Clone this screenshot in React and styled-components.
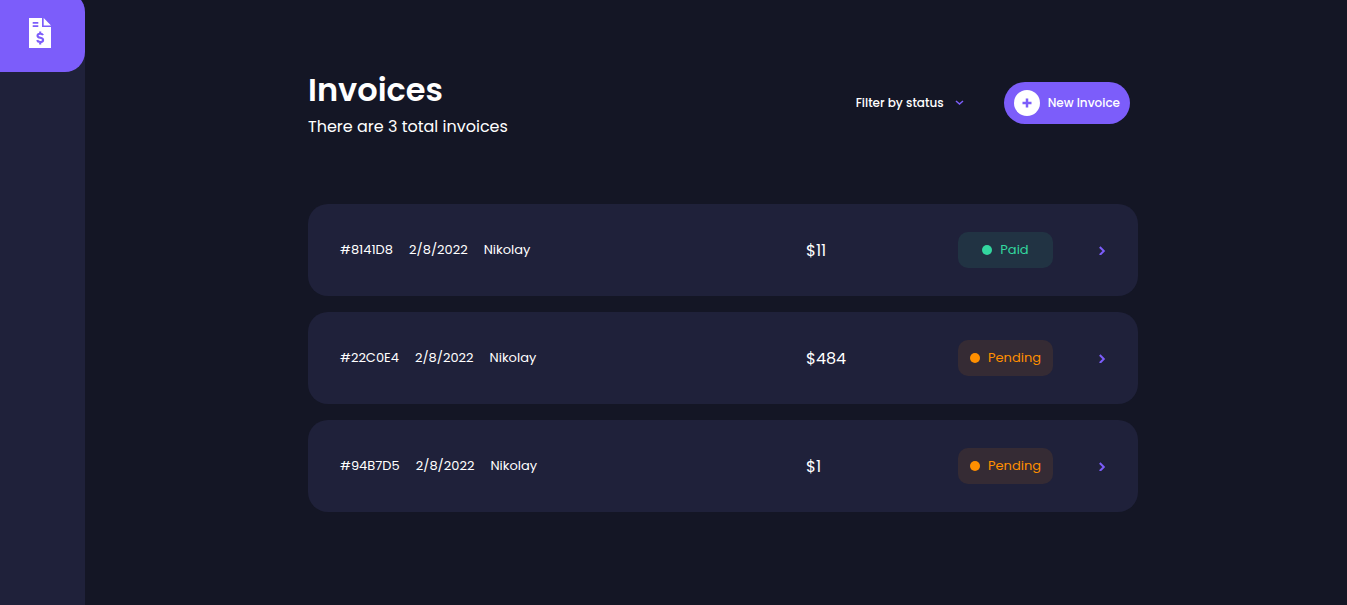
import React from "react";
import styled, { createGlobalStyle } from "styled-components";

const GlobalStyle = createGlobalStyle`
  * { box-sizing: border-box; }
  body {
    margin: 0;
    background: #141625;
    color: #fff;
    font-family: Poppins, Inter, "Liberation Sans", sans-serif;
  }
`;

const Shell = styled.div`
  display: flex;
  min-height: 100vh;
  overflow: hidden;
`;

const Sidebar = styled.nav`
  width: 85px;
  flex: none;
  margin-top: -8px;
  background: #1f213a;
  border-top-right-radius: 20px;
`;

const HomeLink = styled.a`
  display: flex;
  align-items: center;
  justify-content: center;
  height: 80px;
  padding-right: 5px;
  padding-top: 2px;
  background: #7c5dfa;
  border-radius: 0 20px 20px 0;
`;

const Main = styled.main`
  flex: 1;
  min-width: 0;
  padding: 66px 16px 32px 30px;
`;

const Content = styled.div`
  max-width: 830px;
  margin: 0 auto;
`;

const Header = styled.header`
  display: flex;
  align-items: center;
  justify-content: space-between;
  padding-right: 8px;
  margin-bottom: 64px;
`;

const Title = styled.h1`
  margin: 0;
  font-size: 32px;
  line-height: 48px;
  font-weight: 600;
`;

const Subtitle = styled.p`
  margin: 0;
  font-size: 16px;
  line-height: 26px;
`;

const Actions = styled.div`
  display: flex;
  align-items: center;
  gap: 40px;
`;

const Filter = styled.div`
  position: relative;
  display: flex;
  align-items: center;
`;

const FilterSelect = styled.select`
  appearance: none;
  width: 108px;
  padding: 0 16px 0 0;
  border: 0;
  background: transparent;
  color: #fff;
  font: inherit;
  font-size: 12px;
  line-height: 20px;
  font-weight: 500;
  cursor: pointer;
`;

const FilterArrow = styled.svg`
  position: absolute;
  right: 0;
  pointer-events: none;
`;

const NewButton = styled.button`
  display: flex;
  align-items: center;
  gap: 8px;
  height: 42px;
  padding: 0 10px;
  border: 0;
  border-radius: 21px;
  background: #7c5dfa;
  color: #fff;
  font: inherit;
  font-size: 12px;
  font-weight: 500;
  white-space: nowrap;
  cursor: pointer;
`;

const PlusCircle = styled.span`
  display: grid;
  place-items: center;
  width: 26px;
  height: 26px;
  border-radius: 50%;
  background: #fff;
`;

const List = styled.ul`
  display: grid;
  gap: 16px;
  margin: 0;
  padding: 0;
  list-style: none;
`;

const Row = styled.a`
  display: grid;
  grid-template-columns: 1fr 152px 95px 53px;
  align-items: center;
  padding: 28px 32px;
  border-radius: 20px;
  background: #1f213a;
  color: inherit;
  text-decoration: none;
`;

const Details = styled.div`
  display: flex;
  gap: 16px;
  font-size: 13px;
  line-height: 20px;
`;

const Amount = styled.span`
  padding-top: 2px;
  font-size: 16px;
  line-height: 24px;
`;

const tones = {
  Paid: { color: "#33d69f", background: "#213343" },
  Pending: { color: "#ff8f00", background: "#352b34" },
};

const Badge = styled.span`
  display: flex;
  align-items: center;
  justify-content: center;
  gap: 8px;
  height: 36px;
  border-radius: 10px;
  font-size: 13px;
  color: ${(p) => tones[p.$status].color};
  background: ${(p) => tones[p.$status].background};
`;

const Dot = styled.span`
  width: 10px;
  height: 10px;
  border-radius: 50%;
  background: currentColor;
`;

const RowArrow = styled.svg`
  justify-self: end;
`;

const invoices = [
  { id: "8141D8", date: "2/8/2022", client: "Nikolay", amount: "$11", status: "Paid" },
  { id: "22C0E4", date: "2/8/2022", client: "Nikolay", amount: "$484", status: "Pending" },
  { id: "94B7D5", date: "2/8/2022", client: "Nikolay", amount: "$1", status: "Pending" },
];

function InvoiceIcon() {
  return (
    <svg width="22" height="30" viewBox="0 0 22 30" aria-hidden="true">
      <path d="M0 0h13v9h9v21H0z" fill="#fff" />
      <path d="M14.700 0L22 7.400h-7.300z" fill="#fff" />
      <path d="M3.700 4.800h5.600M3.700 8.200h5.600" stroke="#7c5dfa" strokeWidth="1.700" />
      <path
        d="M14 17.200c-.4-1-1.400-1.500-2.800-1.500-1.700 0-2.700.8-2.700 2 0 2.900 5.600 1.400 5.600 4.200 0 1.400-1.200 2.100-2.900 2.100-1.600 0-2.700-.6-3.100-1.800M11.200 13.500v2M11.200 24v2.600"
        fill="none"
        stroke="#7c5dfa"
        strokeWidth="2.100"
      />
    </svg>
  );
}

export default function App() {
  return (
    <>
      <GlobalStyle />
      <Shell>
        <Sidebar>
          <HomeLink href="#" aria-label="Invoices home">
            <InvoiceIcon />
          </HomeLink>
        </Sidebar>
        <Main>
          <Content>
            <Header>
              <div>
                <Title>Invoices</Title>
                <Subtitle>There are 3 total invoices</Subtitle>
              </div>
              <Actions>
                <Filter>
                  <FilterSelect aria-label="Filter by status" defaultValue="">
                    <option value="">Filter by status</option>
                  </FilterSelect>
                  <FilterArrow width="9" height="6" viewBox="0 0 9 6" aria-hidden="true">
                    <path d="M1 1l3.500 3L8 1" fill="none" stroke="#7c5dfa" strokeWidth="1.500" />
                  </FilterArrow>
                </Filter>
                <NewButton type="button">
                  <PlusCircle>
                    <svg width="10" height="10" viewBox="0 0 10 10" aria-hidden="true">
                      <path d="M5 .5v9M.5 5h9" stroke="#7c5dfa" strokeWidth="2.500" />
                    </svg>
                  </PlusCircle>
                  New Invoice
                </NewButton>
              </Actions>
            </Header>
            <List>
              {invoices.map((inv) => (
                <li key={inv.id}>
                  <Row href={`#${inv.id}`}>
                    <Details>
                      <span>#{inv.id}</span>
                      <span>{inv.date}</span>
                      <span>{inv.client}</span>
                    </Details>
                    <Amount>{inv.amount}</Amount>
                    <Badge $status={inv.status}>
                      <Dot />
                      {inv.status}
                    </Badge>
                    <RowArrow width="8" height="10" viewBox="0 0 8 10" aria-hidden="true">
                      <path d="M1.800 2L5.800 6l-4 4" fill="none" stroke="#7c5dfa" strokeWidth="2" />
                    </RowArrow>
                  </Row>
                </li>
              ))}
            </List>
          </Content>
        </Main>
      </Shell>
    </>
  );
}
